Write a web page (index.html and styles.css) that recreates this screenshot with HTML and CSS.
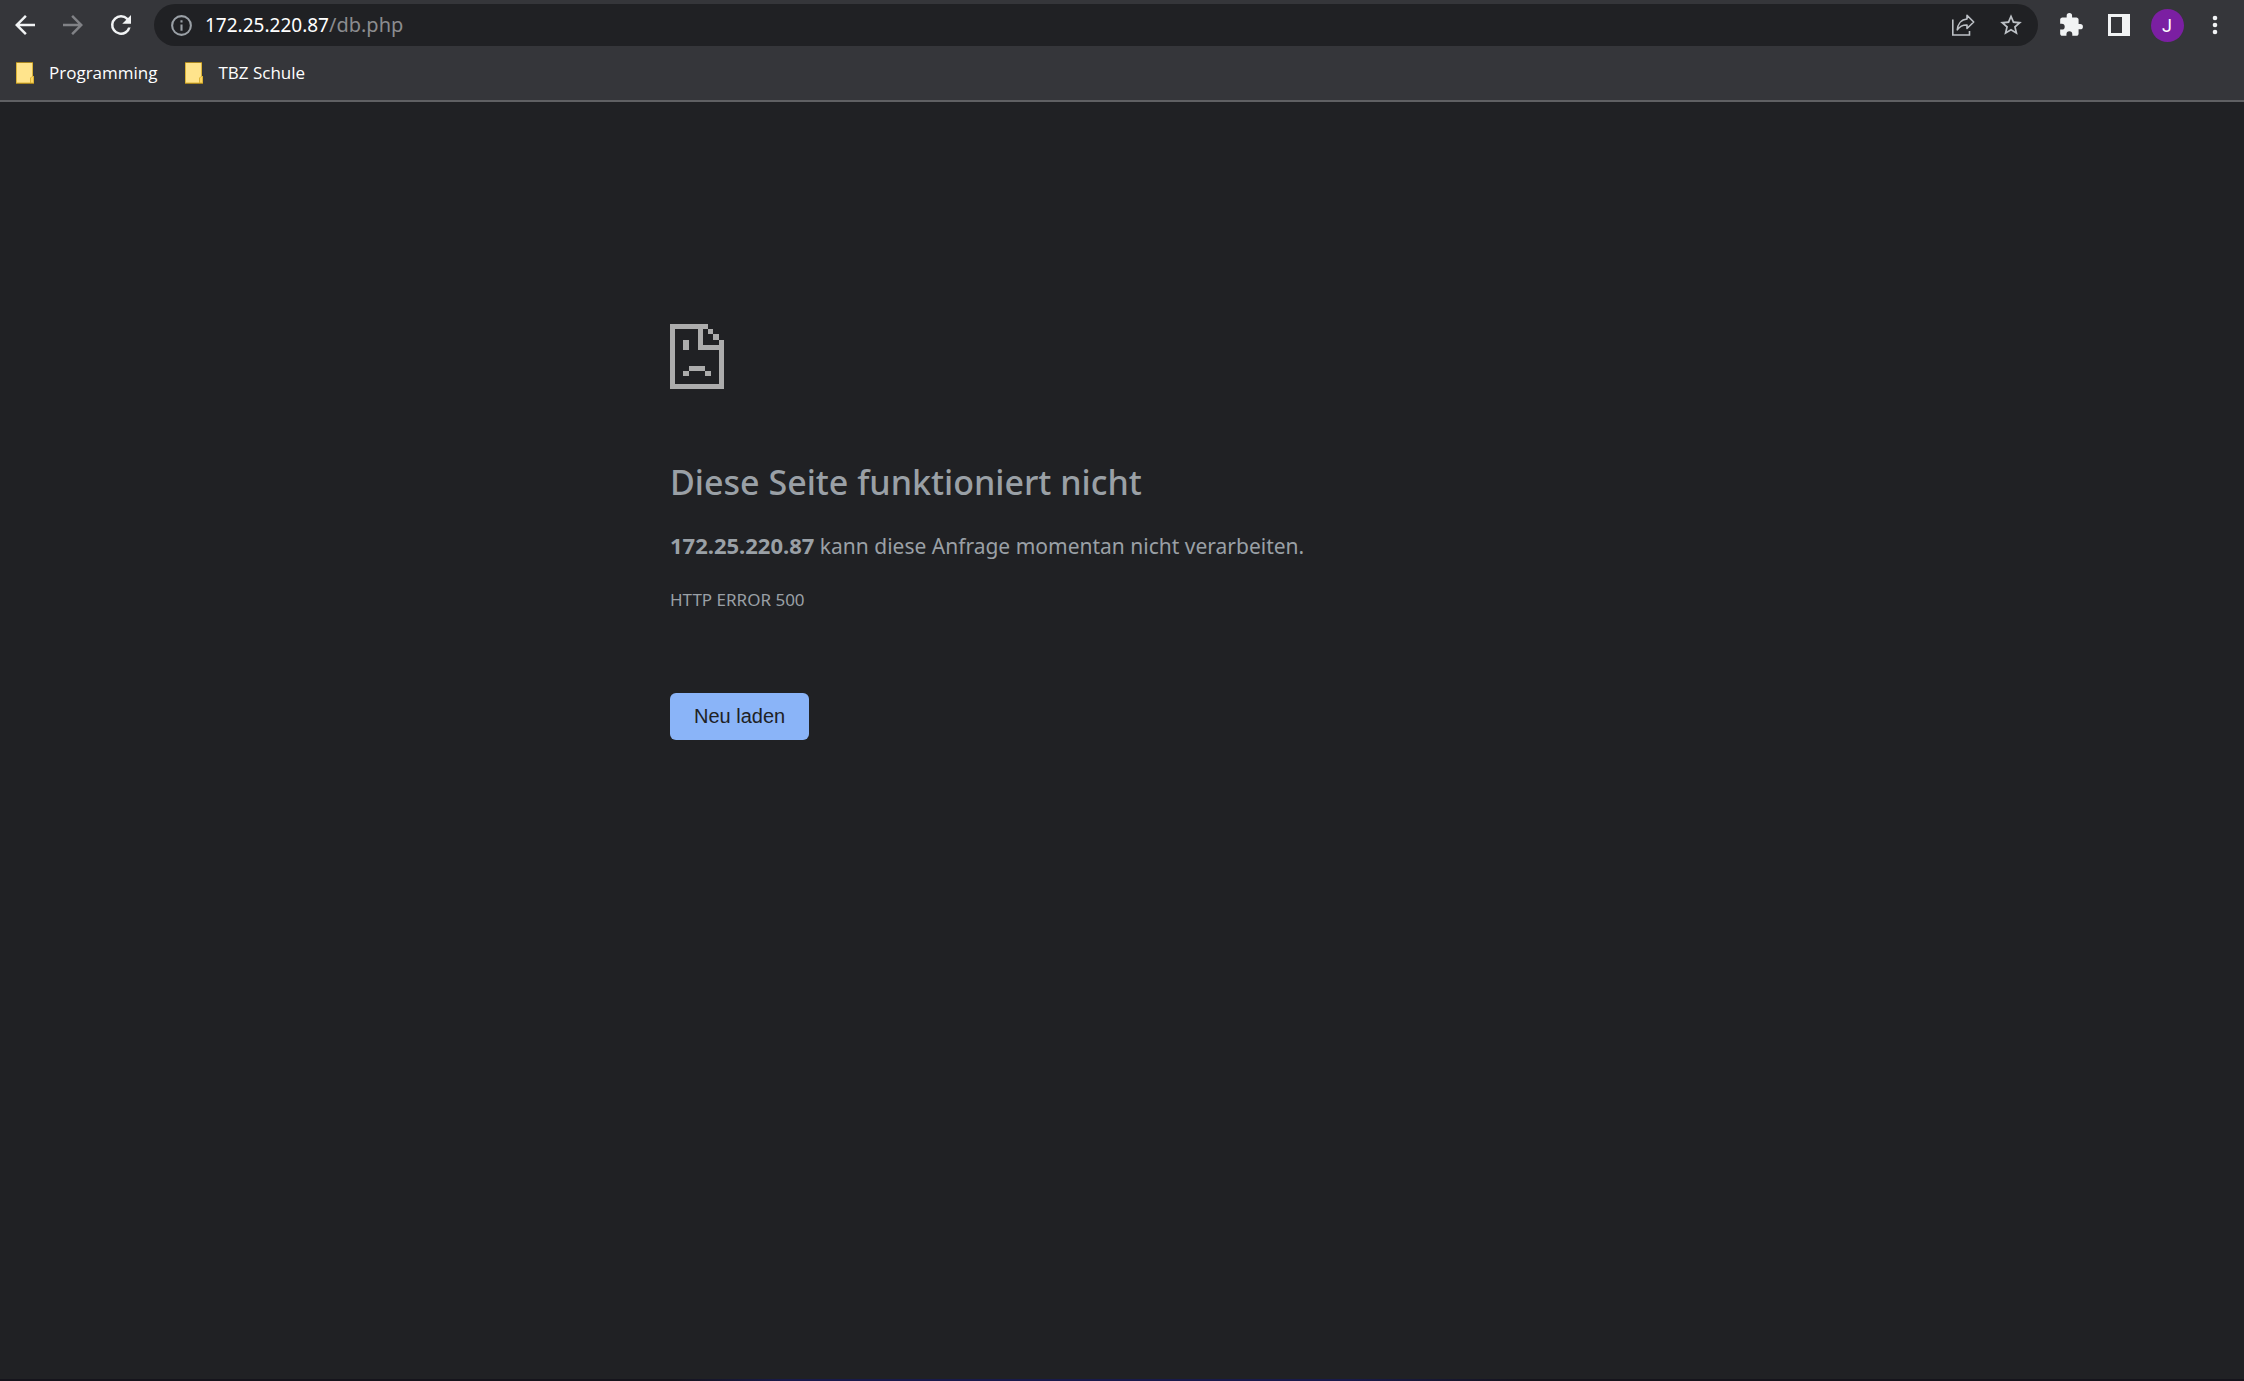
FILE: index.html
```html
<!DOCTYPE html>
<html lang="de">
<head>
<meta charset="utf-8">
<meta name="viewport" content="width=device-width, initial-scale=1">
<title>172.25.220.87</title>
<link rel="stylesheet" href="styles.css">
</head>
<body>
<header class="chrome">
  <div class="toolbar">
    <button class="tool" type="button" aria-label="Zurück"><svg width="30" height="30" viewBox="0 0 24 24"><path d="M20 11H7.83l5.59-5.59L12 4l-8 8 8 8 1.41-1.41L7.83 13H20z"/></svg></button>
    <button class="tool tool-off" type="button" aria-label="Vorwärts" disabled><svg width="30" height="30" viewBox="0 0 24 24"><path d="M12 4l-1.41 1.41L16.17 11H4v2h12.17l-5.58 5.59L12 20l8-8z"/></svg></button>
    <button class="tool" type="button" aria-label="Neu laden"><svg width="30" height="30" viewBox="0 0 24 24"><path d="M17.65 6.35A7.96 7.96 0 0 0 12 4a8 8 0 1 0 7.73 10h-2.08A6 6 0 1 1 12 6c1.66 0 3.14.69 4.22 1.78L13 11h7V4z"/></svg></button>
    <div class="omnibox">
      <svg class="info" width="25" height="25" viewBox="0 0 24 24"><path d="M11 7h2v2h-2zm0 4h2v6h-2zm1-9a10 10 0 1 0 0 20 10 10 0 0 0 0-20zm0 18a8 8 0 1 1 0-16 8 8 0 0 1 0 16z"/></svg>
      <div class="address" role="textbox" contenteditable="true" spellcheck="false" aria-label="Adresse">172.25.220.87<span class="path">/db.php</span></div>
      <button class="tool tool-soft" type="button" aria-label="Teilen"><svg width="24" height="24" viewBox="0 0 24 24" fill="none" stroke="currentColor" stroke-width="1.600"><path d="M1.800 6.500V22H18.500V18"/><path stroke-linejoin="round" d="M16 2.200L22.700 9L16 15.500V12C11.500 11.800 8.700 13.500 6.300 16.800C6.800 11 10.200 6.500 16 6z"/></svg></button>
      <button class="tool tool-soft" type="button" aria-label="Lesezeichen hinzufügen"><svg width="26" height="26" viewBox="0 0 24 24"><path d="M22 9.240l-7.190-.62L12 2 9.190 8.630 2 9.240l5.460 4.730L5.820 21 12 17.270 18.180 21l-1.630-7.030zM12 15.400l-3.760 2.270 1-4.280-3.320-2.880 4.380-.38L12 6.100l1.710 4.040 4.380.38-3.320 2.880 1 4.280z"/></svg></button>
    </div>
    <button class="tool" type="button" aria-label="Erweiterungen"><svg width="26" height="26" viewBox="0 0 24 24"><path d="M20.500 11H19V7c0-1.100-.9-2-2-2h-4V3.500a2.500 2.500 0 0 0-5 0V5H4c-1.100 0-2 .9-2 2v3.800h1.500a2.700 2.700 0 0 1 0 5.400H2V20c0 1.100.9 2 2 2h3.800v-1.500a2.700 2.700 0 0 1 5.400 0V22H17c1.100 0 2-.9 2-2v-4h1.500a2.500 2.500 0 0 0 0-5z"/></svg></button>
    <button class="tool" type="button" aria-label="Seitenleiste"><svg width="22" height="22" viewBox="0 0 22 22"><path fill-rule="evenodd" d="M0 0h22v22H0zM3 3v16h11V3z"/></svg></button>
    <button class="tool" type="button" aria-label="Profil"><span class="avatar">J</span></button>
    <button class="tool" type="button" aria-label="Menü"><svg width="22" height="22" viewBox="0 0 22 22"><circle cx="11" cy="4" r="2.300"/><circle cx="11" cy="11" r="2.300"/><circle cx="11" cy="18" r="2.300"/></svg></button>
  </div>
  <nav class="bookmarks">
    <a class="bookmark" href="#"><svg width="18" height="22" viewBox="0 0 18 22"><path fill="#ffe48c" stroke="#dcb438" d="M.5.500h16v14h1v6.500H.500z"/><path fill="#ffd75e" stroke="#dcb438" d="M14.500 21v-5l1.500-1.500h1.500V21z"/><path stroke="#a98620" d="M0 .500h17M0 21.500h18"/></svg>Programming</a>
    <a class="bookmark" href="#"><svg width="18" height="22" viewBox="0 0 18 22"><path fill="#ffe48c" stroke="#dcb438" d="M.5.500h16v14h1v6.500H.500z"/><path fill="#ffd75e" stroke="#dcb438" d="M14.500 21v-5l1.500-1.500h1.500V21z"/><path stroke="#a98620" d="M0 .500h17M0 21.500h18"/></svg>TBZ Schule</a>
  </nav>
</header>
<main class="error">
  <svg class="sad" width="54" height="65" viewBox="0 0 162 195" shape-rendering="crispEdges"><path fill-rule="evenodd" d="M0 0H114V16H130V31H146V47H162V195H0zM16 16V179H147V78H84V16zM99 16V62H147V47H130V31H114V16z"/><path d="M40 47h16v31H40zM57 126h48v15H57zM40 141h17v16H40zM105 141h17v16h-17z"/></svg>
  <h1 class="title">Diese Seite funktioniert nicht</h1>
  <p class="summary"><strong class="host">172.25.220.87</strong> kann diese Anfrage momentan nicht verarbeiten.</p>
  <p class="code">HTTP ERROR 500</p>
  <button class="reload" type="button">Neu laden</button>
</main>
<footer class="edge"></footer>
</body>
</html>
```
FILE: styles.css
```css
* { box-sizing: border-box; }

body {
  margin: 0;
  min-height: 100vh;
  display: flex;
  flex-direction: column;
  background: #202124;
  color: #9aa0a6;
  font-family: "Noto Sans", "Open Sans", sans-serif;
}

svg { display: block; flex: none; fill: currentColor; }
svg[fill="none"] { fill: none; }

.chrome {
  background: #35363a;
  border-bottom: 2px solid #5f6063;
}

.toolbar {
  display: flex;
  align-items: center;
  height: 50px;
  padding: 0 5px 0 1px;
}

.tool {
  display: grid;
  place-items: center;
  flex: none;
  width: 48px;
  height: 42px;
  padding: 0;
  border: 0;
  background: none;
  color: #f1f3f4;
}

.tool-off { color: #818286; }
.tool-soft { color: #bdc1c6; }

.omnibox {
  display: flex;
  align-items: center;
  flex: 1;
  height: 42px;
  margin: 0 9px;
  padding: 0 3px 0 15px;
  border-radius: 21px;
  background: #202124;
}

.info { color: #9aa0a6; }

.address {
  flex: 1;
  padding-left: 11px;
  color: #fff;
  font-size: 19px;
  line-height: 26px;
  white-space: nowrap;
  outline: 0;
}

.path {
  color: #8b8c8f;
  font-size: 20px;
}

.avatar {
  width: 33px;
  border-radius: 50%;
  background: #7b1fa2;
  color: #fff;
  font: 18px/33px Roboto, sans-serif;
  text-align: center;
}

.bookmarks {
  display: flex;
  gap: 28px;
  padding: 11px 16px 15px;
}

.bookmark {
  display: flex;
  align-items: center;
  gap: 15px;
  color: #fff;
  font: 17px/24px "Open Sans", "Noto Sans", sans-serif;
  text-decoration: none;
}

.error {
  flex: 1;
  width: 100%;
  max-width: 904px;
  margin: 0 auto;
  padding-top: 222px;
}

.sad { color: #acacac; }

.title {
  margin: 70px 0 24px;
  font-size: 34px;
  font-weight: 500;
  line-height: 46px;
}

.summary {
  margin: 0 0 26px;
  font-size: 21px;
  line-height: 32px;
}

.host { font-size: 22px; }

.code {
  margin: 0 0 81px;
  font-size: 17px;
  line-height: 24px;
}

.reload {
  display: block;
  height: 47px;
  padding: 0 24px 2px;
  border: 0;
  border-radius: 6px;
  background: #8ab4f8;
  color: #202124;
  font: 20px/24px "Liberation Sans", Arial, sans-serif;
}

.edge {
  height: 2px;
  background: linear-gradient(90deg, #15141c 0 30%, #181a4c 35% 60%, #15141c 68%);
}
```
